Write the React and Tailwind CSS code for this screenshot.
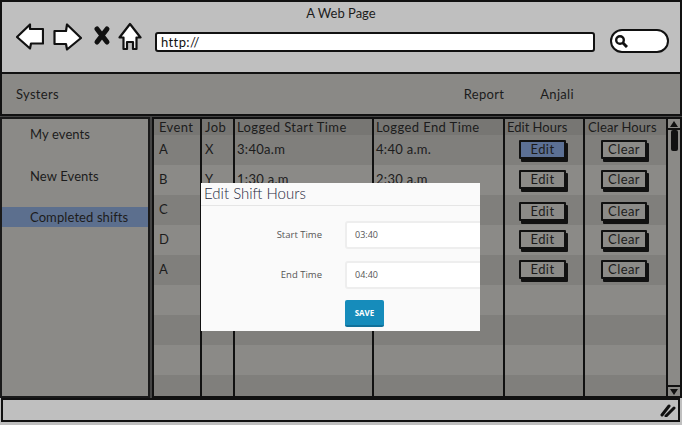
import React from 'react';

const rows = [
  { event: 'A', job: 'X', start: '3:40a.m', end: '4:40 a.m.', dark: true, shift: '-mt-0.5', active: true },
  { event: 'B', job: 'Y', start: '1:30 a.m', end: '2:30 a.m', dark: false, shift: '-mt-0.5' },
  { event: 'C', job: '', start: '', end: '', dark: true, shift: 'mt-0.5' },
  { event: 'D', job: '', start: '', end: '', dark: false, shift: '-mt-0.5' },
  { event: 'A', job: '', start: '', end: '', dark: true, shift: '-mt-0.5' },
  { event: '', dark: false },
  { event: '', dark: true },
  { event: '', dark: false },
  { event: '', dark: true, last: true },
];

const SketchButton = ({ label, active, width, shift }) => (
  <div
    className={`flex h-[19px] items-center justify-center rounded-[1px] border-2 border-[#111] text-[13px] leading-none tracking-[0.4px] text-[#1c1c1c] shadow-[2px_3px_0_#111] ${width} ${shift} ${active ? 'bg-[#5c7094]' : 'bg-[#8c8b88]'}`}
  >
    {label}
  </div>
);

const Sidebar = () => (
  <div className="flex w-[150px] shrink-0 flex-col border-2 border-[#1a1a1a] bg-[#8b8a87] pt-[6px] text-[13px] tracking-[0.1px] text-[#1c1c1c]">
    <div className="flex h-[20px] items-center pl-[28px]">My events</div>
    <div className="mt-[22px] flex h-[20px] items-center pl-[28px]">New Events</div>
    <div className="mt-[20px] flex h-[20px] items-center bg-[#5c6f8e] pl-[28px] pt-[1px]">Completed shifts</div>
  </div>
);

const TableRow = ({ row }) => (
  <div className={`flex text-[13px] tracking-[0.3px] text-[#1c1c1c] ${row.last ? 'h-[21px]' : 'h-[30px]'} ${row.dark ? 'bg-[#807f7c]' : 'bg-[#8b8a87]'}`}>
    <div className="flex w-[48px] items-center border-r-2 border-[#111] pl-[5px]">{row.event}</div>
    <div className="flex w-[33px] items-center border-r-2 border-[#111] pl-[3px]">{row.job}</div>
    <div className="flex w-[139px] items-center border-r-2 border-[#111] pl-[2px]">{row.start}</div>
    <div className="flex w-[131px] items-center border-r-2 border-[#111] pl-[2px]">{row.end}</div>
    <div className="flex w-[80px] items-center border-r-2 border-[#111] pl-[14px]">
      {row.shift && <SketchButton label="Edit" active={row.active} width="w-[47px]" shift={row.shift} />}
    </div>
    <div className="flex w-[81px] items-center pl-[16px]">
      {row.shift && <SketchButton label="Clear" width="w-[46px]" shift={row.shift} />}
    </div>
  </div>
);

const Table = () => (
  <div className="ml-[2px] flex flex-1 border-2 border-[#111] bg-[#8b8a87]">
    <div className="w-[512px]">
      <div className="flex h-[16px] bg-[#777673] text-[13px] leading-none tracking-[0.4px] text-[#1c1c1c]">
        <div className="flex w-[48px] items-center border-r-2 border-[#111] pl-[5px]">Event</div>
        <div className="flex w-[33px] items-center border-r-2 border-[#111] pl-[3px]">Job</div>
        <div className="flex w-[139px] items-center border-r-2 border-[#111] pl-[2px]">Logged Start Time</div>
        <div className="flex w-[131px] items-center border-r-2 border-[#111] pl-[2px]">Logged End Time</div>
        <div className="flex w-[80px] items-center border-r-2 border-[#111] pl-[2px] tracking-normal">Edit Hours</div>
        <div className="flex w-[81px] items-center pl-[3px] tracking-[0.1px]">Clear Hours</div>
      </div>
      {rows.map((row, i) => (
        <TableRow key={i} row={row} />
      ))}
    </div>
    <div className="flex flex-1 flex-col items-center border-l-2 border-[#111] bg-[#8b8a87]">
      <div className="flex h-[11px] w-full items-center justify-center border-b-2 border-[#111]">
        <svg width="8" height="6" viewBox="0 0 8 6"><path d="M4 0 L8 6 L0 6 Z" fill="#111" /></svg>
      </div>
      <div className="h-[21px] w-[7px] rounded-[2px] bg-[#111]" />
      <div className="mt-auto flex h-[11px] w-full items-center justify-center border-t-2 border-[#111]">
        <svg width="8" height="6" viewBox="0 0 8 6"><path d="M0 0 L8 0 L4 6 Z" fill="#111" /></svg>
      </div>
    </div>
  </div>
);

const Modal = () => (
  <div className="absolute left-[201px] top-[183px] h-[148px] w-[279px] overflow-hidden bg-[#fafafa] font-['Open_Sans',sans-serif]">
    <div className="h-[23px] border-b border-[#e5e5e5] pl-[3px] font-['Lato',sans-serif] text-[15px] font-light leading-[21px] text-[#1f2940]">
      Edit Shift Hours
    </div>
    <div className="mt-[15px] flex items-center">
      <div className="w-[121px] shrink-0 text-right text-[9.5px] text-[#555]">Start Time</div>
      <div className="ml-[23px] flex h-[28px] w-[160px] shrink-0 items-center rounded-[3px] border-2 border-[#eeeeee] bg-white pl-[8px] text-[9px] text-[#555]">03:40</div>
    </div>
    <div className="mt-[12px] flex items-center">
      <div className="w-[121px] shrink-0 text-right text-[9.5px] text-[#555]">End Time</div>
      <div className="ml-[23px] flex h-[28px] w-[160px] shrink-0 items-center rounded-[3px] border-2 border-[#eeeeee] bg-white pl-[8px] text-[9px] text-[#555]">04:40</div>
    </div>
    <div className="ml-[144px] mt-[11px] flex h-[27px] w-[39px] items-center justify-center rounded-[2px] border-b-2 border-[#11719a] bg-[#168cbb] text-[8px] font-bold text-white">
      SAVE
    </div>
  </div>
);

export default function App() {
  return (
    <div className="relative h-[425px] w-[682px] overflow-hidden bg-[#bfbfbf] font-['Lato',sans-serif]">
      {/* window top */}
      <div className="h-[74px] border-2 border-[#111] bg-[#bfbfbf]">
        <div className="pt-[3px] text-center text-[13px] leading-[17px] text-[#1c1c1c]">A Web Page</div>
        <div className="flex items-start pl-[14px]">
          <svg width="28" height="30" viewBox="16 22 28 30" fill="#fff" stroke="#111" strokeWidth="2.2" strokeLinejoin="round">
            <path d="M17 37 L30 24.5 L30 29 L43 29 L43 43.5 L31 43.5 L30 48.5 Z" />
          </svg>
          <svg width="29" height="30" viewBox="53 22 29 30" fill="#fff" stroke="#111" strokeWidth="2.2" strokeLinejoin="round" className="ml-[9px]">
            <path d="M81 38 L67 24.5 L66 31 L54.5 31 L54.5 44 L66 44 L67 49.5 Z" />
          </svg>
          <svg width="18" height="30" viewBox="93 22 18 30" className="ml-[11px]">
            <path d="M97 29 L107 42 M107 29 L97 42" stroke="#111" strokeWidth="5" strokeLinecap="round" />
          </svg>
          <svg width="24" height="30" viewBox="118 22 24 30" fill="#fff" stroke="#111" strokeWidth="2.2" strokeLinejoin="round" className="ml-[7px]">
            <path d="M130 24 L140.5 37.5 L136.5 37.5 L136.5 49 L133 49 L133 42 L127 42 L127 49 L123.5 49 L123.5 37.5 L119.5 37.5 Z" />
          </svg>
          <div className="ml-[13px] mt-[10px] flex h-[20px] w-[440px] items-center rounded-[3px] border-2 border-[#111] bg-white pl-[4px] text-[13px] leading-none tracking-[0.4px] text-[#111]">
            http://
          </div>
          <div className="ml-[15px] mt-[7px] flex h-[24px] w-[59px] items-center rounded-[12px] border-2 border-[#111] bg-white pl-[2px]">
            <svg width="14" height="14" viewBox="0 0 14 14" fill="none" stroke="#111">
              <circle cx="6" cy="6" r="3.8" strokeWidth="2.4" />
              <path d="M9 9 L13 13" strokeWidth="3" />
            </svg>
          </div>
        </div>
      </div>

      {/* nav bar */}
      <div className="flex h-[42px] items-center border-2 border-t-0 border-[#111] bg-[#8a8986] pt-[1px] text-[13px] tracking-[0.3px] text-[#1c1c1c]">
        <span className="ml-[14px]">Systers</span>
        <span className="ml-[405px]">Report</span>
        <span className="ml-[36px]">Anjali</span>
      </div>

      {/* body */}
      <div className="flex h-[282px] bg-[#444] pt-[1px]">
        <Sidebar />
        <Table />
      </div>

      {/* status bar */}
      <div className="ml-[1px] mr-[2px] flex h-[24px] items-center justify-end border-2 border-[#111] bg-[#bfbfbf] pr-[2px]">
        <svg width="16" height="14" viewBox="0 0 16 14" stroke="#111" strokeWidth="3" strokeLinecap="round">
          <path d="M2 12 L9 3 M6 13 L14 5" />
        </svg>
      </div>

      <Modal />
    </div>
  );
}
